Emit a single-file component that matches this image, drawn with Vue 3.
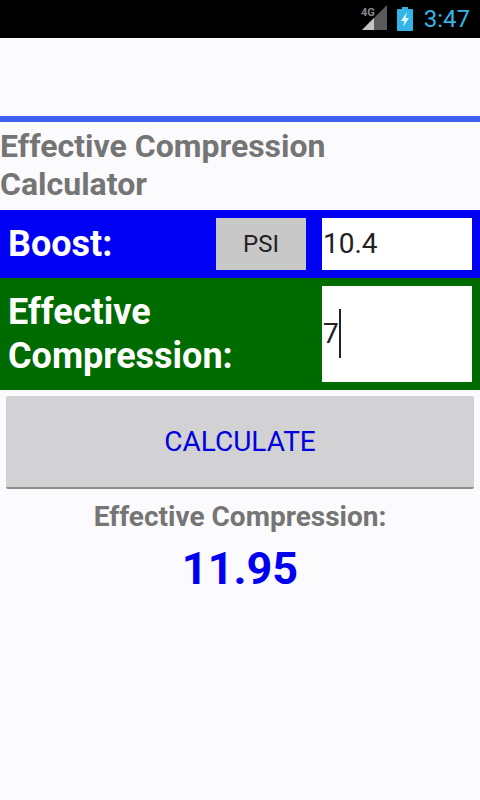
<template>
  <div class="tela">
    <div class="status">
      <svg class="sinal" width="34" height="26" viewBox="0 0 34 26">
        <path d="M33 1V26H8z" fill="#5a5a5a" />
        <path d="M20 14V26H8z" fill="#c4c4c4" />
      </svg>
      <span class="rede">4G</span>
      <svg class="bateria" width="16" height="24" viewBox="0 0 16 24">
        <path d="M5 0h6v2h4a1 1 0 0 1 1 1v20a1 1 0 0 1-1 1H1a1 1 0 0 1-1-1V3a1 1 0 0 1 1-1h4z" fill="#33b5e5" />
        <path d="M10 5 4 14h3.500L6 20l6-9H8.500z" fill="#e8f6fb" />
      </svg>
      <span class="hora">3:47</span>
    </div>

    <div class="topo"></div>
    <h1 class="titulo">Effective Compression Calculator</h1>

    <div class="linha boost">
      <span class="rotulo">Boost:</span>
      <button class="unidade">PSI</button>
      <div class="campo">10.4</div>
    </div>

    <div class="linha efetiva">
      <span class="rotulo">Effective Compression:</span>
      <div class="campo alto"><span class="cursor">7</span></div>
    </div>

    <button class="calcular">CALCULATE</button>

    <div class="resultado">
      <div class="res-rotulo">Effective Compression:</div>
      <div class="res-valor">{{ valor }}</div>
    </div>
  </div>
</template>

<script setup>
const valor = '11.95'
</script>

<style>
html, body { margin: 0; background: #fbfafc; }
</style>

<style scoped>
.tela { width: 480px; height: 800px; overflow: hidden; background: #fbfafc; font-family: Roboto, "Liberation Sans", sans-serif; }
.status { height: 38px; background: #000; display: flex; align-items: center; justify-content: flex-end; padding-right: 10px; box-sizing: border-box; position: relative; }
.sinal { position: absolute; left: 354px; top: 4px; }
.rede { position: absolute; left: 361px; top: 6px; font-size: 11px; line-height: 13px; font-weight: 700; color: #8a8a8a; }
.bateria { position: absolute; left: 397px; top: 7px; }
.hora { font-size: 24px; line-height: 38px; color: #33b5e5; }
.topo { height: 78px; border-bottom: 6px solid #4060f0; }
.titulo { margin: 0; font-size: 32px; line-height: 38px; font-weight: 700; color: #757575; width: 340px; padding: 5px 0 7px; }
.linha { display: flex; align-items: center; padding: 8px; box-sizing: border-box; color: #fff; }
.boost { height: 68px; background: #0000f5; }
.efetiva { height: 112px; background: #006b00; }
.rotulo { font-size: 36px; font-weight: 700; line-height: 44px; }
.boost .rotulo { width: 208px; }
.efetiva .rotulo { width: 314px; }
.unidade { width: 90px; height: 52px; margin: 0 16px 0 0; padding: 0; border: 0; background: #c8c8c8; color: #222; font: 24px Roboto, sans-serif; }
.campo { width: 150px; height: 52px; background: #fff; color: #222; font-size: 28px; line-height: 52px; padding-left: 1px; box-sizing: border-box; }
.alto { height: 96px; line-height: 96px; }
.cursor { border-right: 2px solid #222; padding: 8px 0; }
.calcular { display: block; width: 468px; height: 93px; margin: 6px; padding: 0; border: 0; border-bottom: 2px solid #8e8e8e; border-radius: 2px; background: #d2d2d4; color: #0000e0; font: 28px Roboto, sans-serif; }
.resultado { text-align: center; margin-top: -6px; }
.res-rotulo { font-size: 28px; font-weight: 700; line-height: 56px; color: #757575; }
.res-valor { font-size: 45px; font-weight: 700; line-height: 48px; color: #0000f0; }
</style>
